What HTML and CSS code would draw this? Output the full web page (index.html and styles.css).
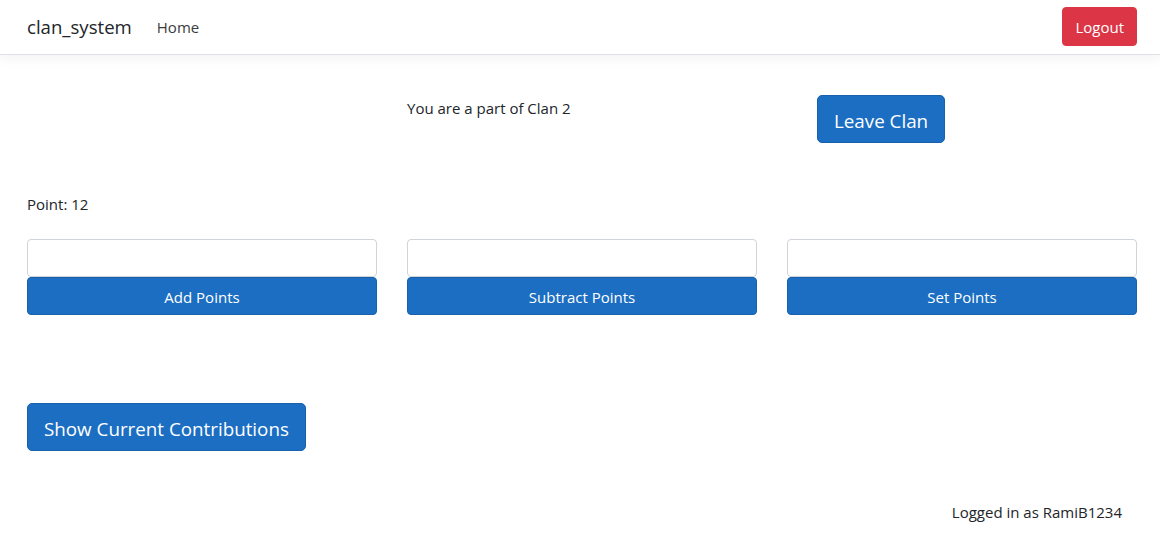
FILE: index.html
```html
<!DOCTYPE html>
<html>
<head>
<meta charset="utf-8">
<link rel="stylesheet" href="styles.css">
</head>
<body>
<header class="navbar">
  <div class="nav-left">
    <span class="brand">clan_system</span>
    <a class="nav-link">Home</a>
  </div>
  <button class="btn btn-danger">Logout</button>
</header>
<main class="main">
  <div class="clan-row">
    <div></div>
    <div class="clan-text">You are a part of Clan 2</div>
    <div class="clan-action"><button class="btn btn-primary btn-lg">Leave Clan</button></div>
  </div>
  <p class="points">Point: 12</p>
  <div class="forms">
    <div class="form-col">
      <input class="input" type="text">
      <button class="btn btn-primary btn-block">Add Points</button>
    </div>
    <div class="form-col">
      <input class="input" type="text">
      <button class="btn btn-primary btn-block">Subtract Points</button>
    </div>
    <div class="form-col">
      <input class="input" type="text">
      <button class="btn btn-primary btn-block">Set Points</button>
    </div>
  </div>
  <div class="contrib">
    <button class="btn btn-primary btn-lg">Show Current Contributions</button>
  </div>
  <footer class="footer">Logged in as RamiB1234</footer>
</main>
</body>
</html>
```
FILE: styles.css
```css
* { box-sizing: border-box; }
html, body { margin: 0; padding: 0; }
body {
  font-family: "Open Sans", "Noto Sans", sans-serif;
  font-size: 15px;
  line-height: 24px;
  color: #212529;
  background: #fff;
  width: 1160px;
  height: 536px;
  overflow: hidden;
}
.navbar {
  height: 55px;
  border-bottom: 1px solid #dee2e6;
  box-shadow: 0 4px 12px rgba(0,0,0,0.05);
  display: flex;
  align-items: center;
  justify-content: space-between;
  padding: 0 23px 1px 27px;
}
.nav-left { display: flex; align-items: center; }
.brand { font-size: 18.6px; color: #212529; margin-right: 25px; }
.nav-link { color: #3b3b3b; font-size: 15px; }
.btn {
  font-family: inherit;
  font-size: 15px;
  line-height: 24px;
  border: 1px solid transparent;
  border-radius: 4px;
  padding: 6px 12px;
  color: #fff;
  cursor: pointer;
}
.btn-danger { background: #dc3545; border-color: #dc3545; height: 39px; padding: 6px 12px; }
.btn-primary { background: #1b6ec2; border-color: #1861ac; }
.btn-lg { font-size: 18.8px; line-height: 28px; padding: 11px 16px 7px; border-radius: 5px; height: 48px; }
.btn-block { width: 100%; height: 38px; display: block; padding: 7px 12px 5px; }
.main { padding: 40px 23px 0 27px; }
.clan-row {
  display: grid;
  grid-template-columns: repeat(3, 1fr);
  column-gap: 30px;
  height: 48px;
}
.clan-text { padding-top: 1px; }
.clan-action { padding-left: 30px; }
.points { margin: 49px 0 0; }
.forms {
  margin-top: 23px;
  display: grid;
  grid-template-columns: repeat(3, 1fr);
  column-gap: 30px;
}
.input {
  display: block;
  width: 100%;
  height: 38px;
  border: 1px solid #ced4da;
  border-radius: 4px;
  background: #fff;
}
.contrib { margin-top: 88px; }
.footer { margin-top: 49px; text-align: right; padding-right: 15px; }
```
